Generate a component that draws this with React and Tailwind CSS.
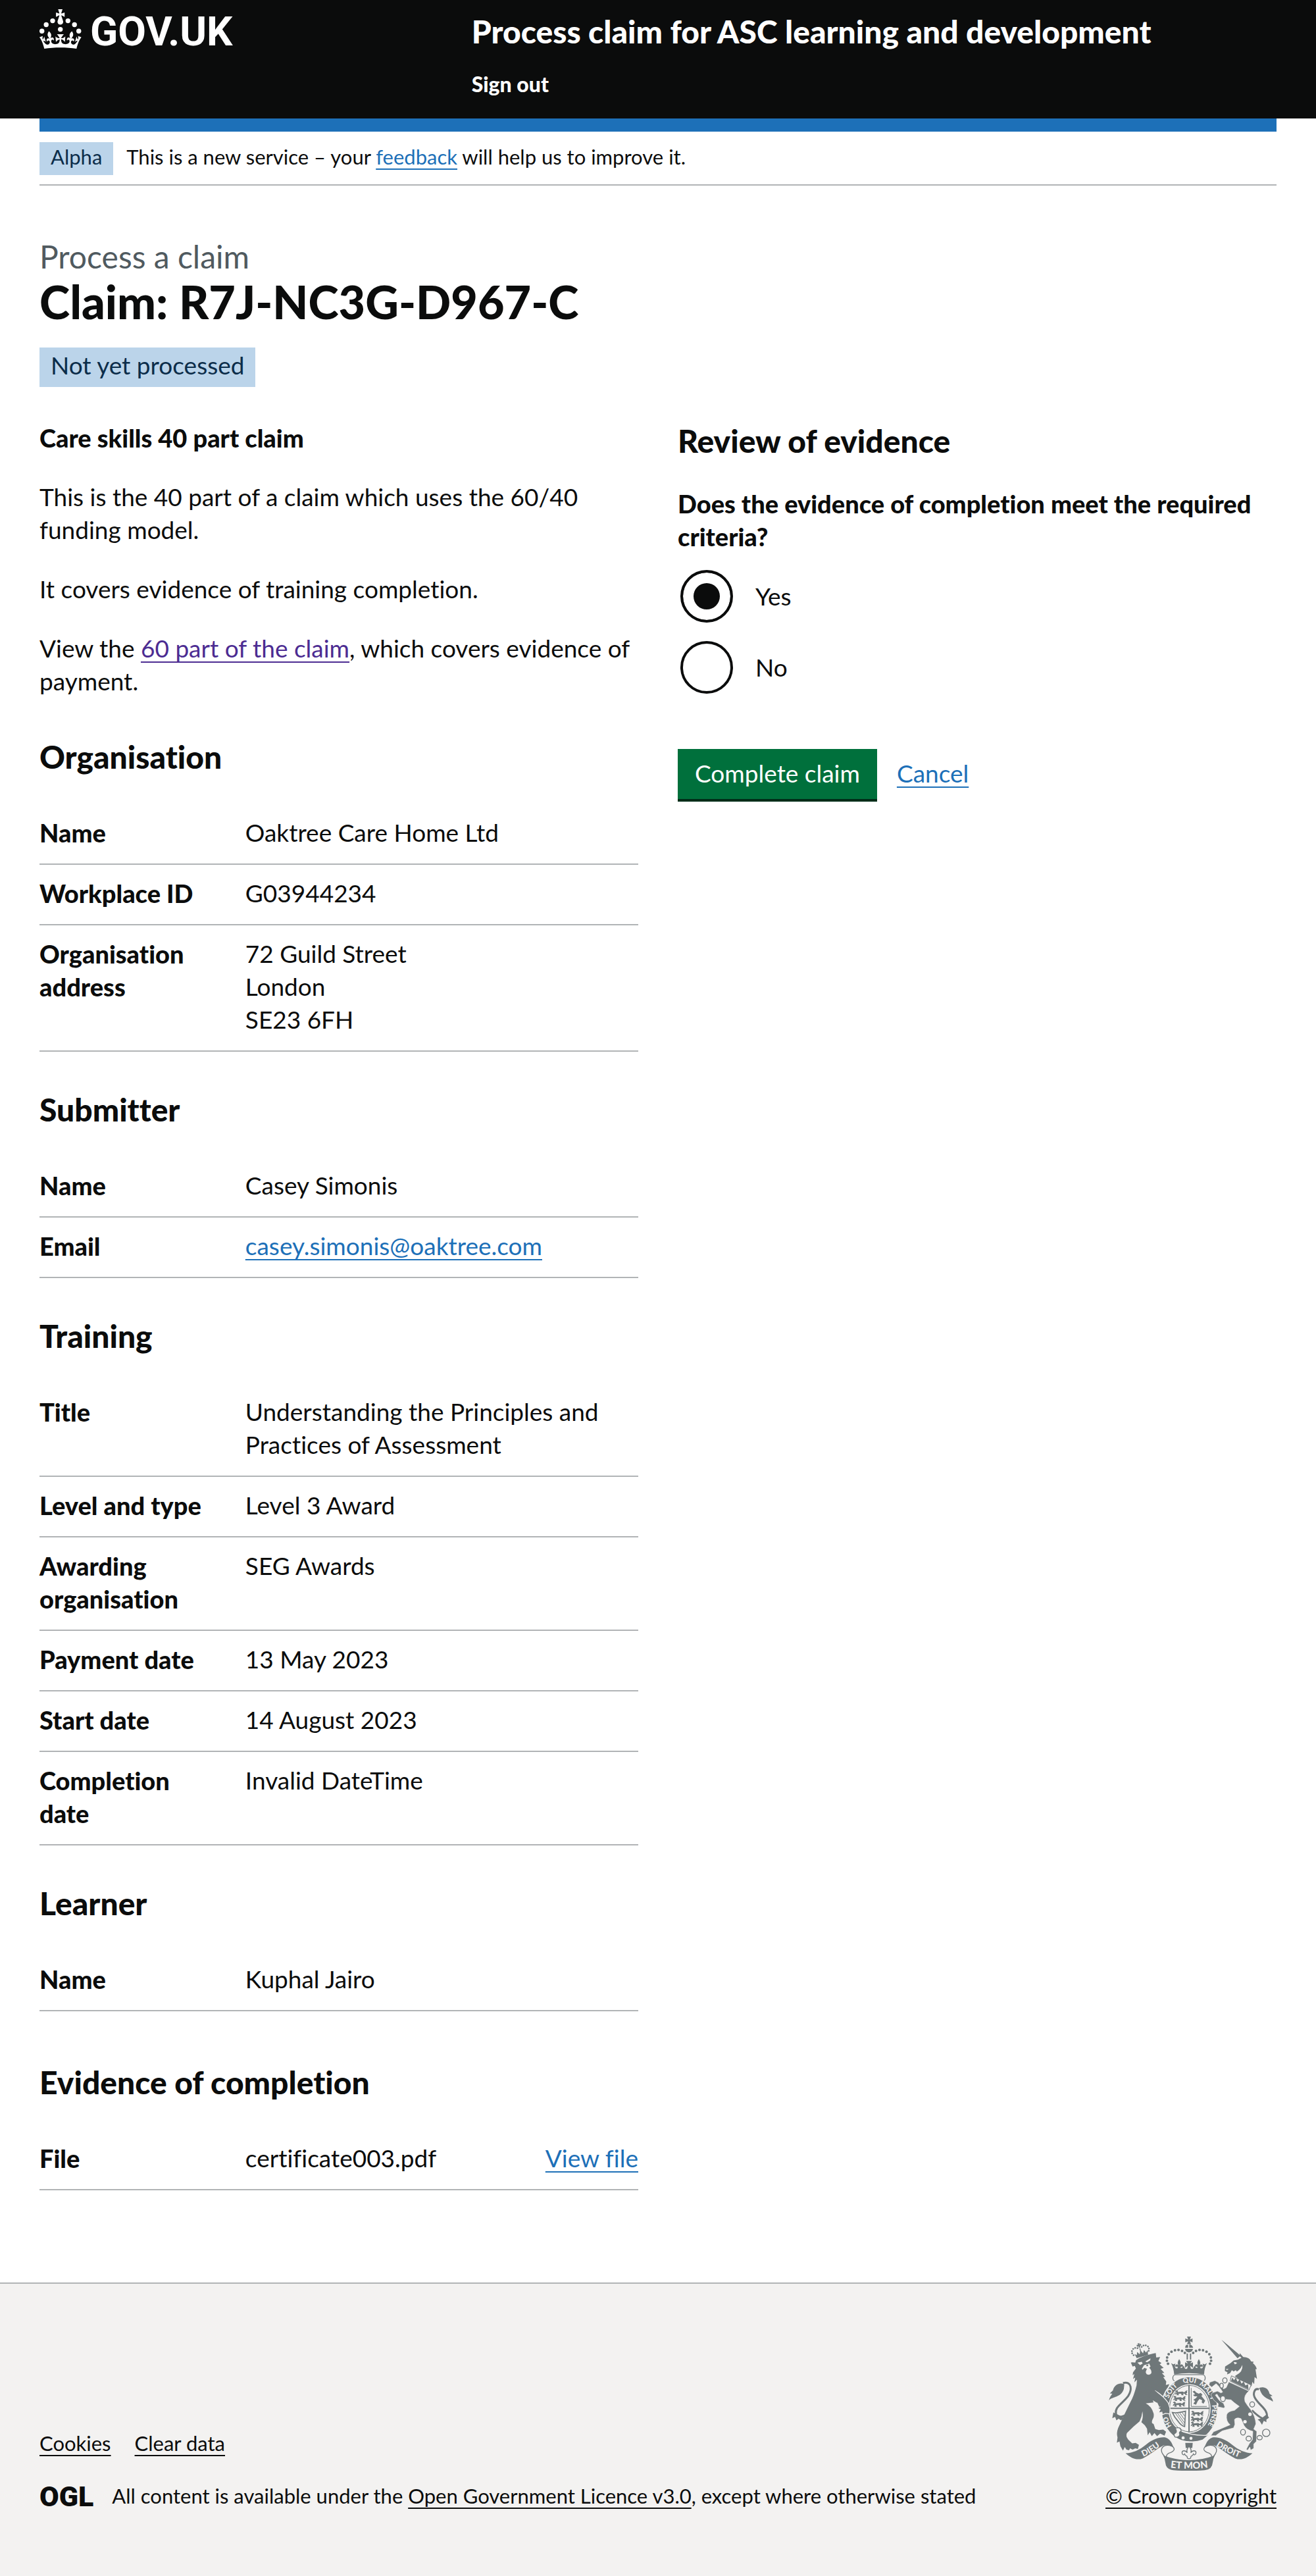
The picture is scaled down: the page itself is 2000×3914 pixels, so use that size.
const LINK = "underline decoration-2 underline-offset-[6px]";
const BLUE_LINK = "text-[#1d70b8] underline decoration-2 underline-offset-[6px]";

function Crown() {
  return (
    <svg className="h-[60px] w-[64px] shrink-0" viewBox="0 0 64 60" fill="currentColor" aria-hidden="true">
      <circle cx="20" cy="17.6" r="3.7" />
      <circle cx="10.2" cy="23.5" r="3.7" />
      <circle cx="3.7" cy="33.2" r="3.7" />
      <circle cx="31.7" cy="30.6" r="3.7" />
      <circle cx="43.3" cy="17.6" r="3.7" />
      <circle cx="53.2" cy="23.5" r="3.7" />
      <circle cx="59.7" cy="33.2" r="3.7" />
      <path d="M33.1,9.8c.2-.1.3-.3.5-.5l4.6,2.4v-6.8l-4.6,1.5c-.1-.2-.3-.3-.5-.5l1.9-5.9h-6.7l1.9,5.9c-.2.1-.3.3-.5.5l-4.6-1.5v6.8l4.6-2.4c.1.2.3.3.5.5l-2.6,8c-.9,2.8,1.2,5.7,4.1,5.7h0c3,0,5.1-2.9,4.1-5.7l-2.6-8ZM37,37.9s-3.4,3.8-4.1,6.1c2.2,0,4.2-.5,6.4-2.8l-.7,8.5c-2-2.8-4.4-4.1-5.7-3.8.1,3.1.5,6.7,5.8,7.2,3.7.3,6.7-1.5,7-3.8.4-2.6-2-4.3-3.7-1.6-1.4-4.5,2.4-6.1,4.9-3.2-1.9-4.5-1.8-7.7,2.4-10.9,3,4,2.6,7.3-1.2,11.1,2.4-1.3,6.2,0,4,4.6-1.2-2.8-3.7-2.2-4.2.2-.3,1.7.7,3.7,3,4.2,1.9.3,4.7-.9,7-5.9-1.3,0-2.4.7-3.9,1.7l2.4-8c.6,2.3,1.4,3.7,2.2,4.5.6-1.6.5-2.8,0-5.3l5,1.8c-2.6,3.6-5.2,8.7-7.3,17.5-7.4-1.1-15.7-1.7-24.5-1.7h0c-8.8,0-17.1.6-24.5,1.7-2.1-8.9-4.7-13.9-7.3-17.5l5-1.8c-.5,2.5-.6,3.7,0,5.3.8-.8,1.6-2.3,2.2-4.5l2.4,8c-1.5-1-2.6-1.7-3.9-1.7,2.3,5,5.2,6.2,7,5.9,2.3-.4,3.3-2.4,3-4.2-.5-2.4-3-3.1-4.2-.2-2.2-4.6,1.6-6,4-4.6-3.7-3.7-4.2-7.1-1.2-11.1,4.2,3.2,4.3,6.4,2.4,10.9,2.5-2.8,6.3-1.3,4.9,3.2-1.8-2.7-4.1-1-3.7,1.6.3,2.3,3.3,4.1,7,3.8,5.4-.5,5.7-4.2,5.8-7.2-1.3-.2-3.7,1-5.7,3.8l-.7-8.5c2.2,2.3,4.2,2.7,6.4,2.8-.7-2.3-4.1-6.1-4.1-6.1h10.6,0Z" />
    </svg>
  );
}

const INK = "#6f7779";
const PAPER = "#f3f2f1";
const PEARLS = [[312, 153], [307, 139], [308, 124], [315, 109], [328, 98], [344, 91], [360, 90], [376, 94], [389, 103]];
const RINGS = [[572, 229, 10, 12], [557, 253, 8, 11], [563, 313, 11, 13], [697, 339, 11, 12], [655, 466, 11, 13], [681, 495, 12, 11], [731, 491, 12, 10], [761, 469, 17, 17]];
const MOTTO = [["HO", "17%"], ["SOIT", "37%"], ["QUI", "50%"], ["MAL", "61%"], ["Y", "68%"], ["PENSE", "79%"]];

function Passant({ x, y }) {
  return (
    <path
      transform={`translate(${x} ${y})`}
      d="M0 4 L6 0 L14 3 L12 8 L34 6 L42 10 L50 2 L58 1 L54 6 L56 12 L50 16 L58 21 L48 22 L44 16 L36 16 L40 23 L30 23 L28 16 L16 16 L18 23 L6 23 L10 16 L0 20 L2 13 L8 10 Z"
    />
  );
}

function Lis({ x, y }) {
  return (
    <path
      transform={`translate(${x} ${y})`}
      d="M0 -19 C7 -8 9 0 3 9 C8 4 17 3 18 12 C17 18 11 18 10 13 C7 17 5 20 8 26 L-8 26 C-5 20 -7 17 -10 13 C-11 18 -17 18 -18 12 C-17 3 -8 4 -3 9 C-9 0 -7 -8 0 -19 Z"
    />
  );
}

function RoyalArms() {
  return (
    <svg className="h-[204px] w-[250px]" viewBox="42 28 750 614" fill={INK} aria-hidden="true">
      <defs>
        <path id="garter" d="M410 484 A104 123 0 0 1 410 238 A104 123 0 0 1 410 484" />
        <path id="scroll-left" d="M182 584 Q228 570 290 519" />
        <path id="scroll-right" d="M519 520 Q580 562 650 586" />
        <path id="scroll-mid" d="M318 627 Q408 640 500 627" />
      </defs>

      {/* lion's tail */}
      <path d="M106 241 C150 232 146 274 130 300 C106 334 66 350 74 382 C80 404 116 398 146 366" fill="none" stroke={INK} strokeWidth="9" />
      <path d="M112 246 C90 238 66 248 60 275 L46 288 L57 290 C50 300 44 308 42 320 C58 302 98 308 110 268 Z" />
      <path d="M62 376 L57 402 L70 396 L76 412 L86 404 L96 411 L112 404 L96 392 Z" />

      {/* lion */}
      <path d="M148 146 L142 148 L150 166 L160 163 L165 175 L152 192 L150 205 L158 200 L152 222 L162 216 L158 238 L170 226 L168 252 Q156 300 140 328 Q112 384 84 446 Q75 470 81 490 L78 514 L90 508 L94 530 L106 550 L114 534 L122 546 L134 549 L138 540 L150 546 L162 540 L174 543 L179 524 L164 515 L148 517 L130 500 Q117 484 124 470 Q152 440 182 416 Q192 396 195 370 Q200 398 190 420 L206 434 L216 450 L219 480 L228 466 L238 484 L250 470 L262 484 L276 472 L296 482 L303 464 L290 454 L270 456 L254 452 L246 428 Q234 426 240 410 Q250 394 246 380 Q236 346 210 334 L246 330 L242 320 L262 332 L266 318 L276 336 L288 334 L300 330 L312 330 Q308 314 298 302 Q304 274 318 246 L302 250 L304 234 L290 214 L299 212 L284 196 L295 194 L278 176 L292 172 L274 156 L282 150 L268 140 L276 122 L258 124 L256 104 L244 106 Q190 118 166 136 L162 148 Z" />
      <path d="M172 148 L192 144 L196 152 L184 159 Z M208 142 L232 128 L230 138 L216 146 Z M202 160 L226 152 L232 166 L226 172 Q238 182 236 196 Q228 208 214 200 Q206 190 216 176 L204 172 L196 180 L192 176 Z" fill={PAPER} />
      <path d="M212 158 L222 156 L220 164 L214 164 Z" />
      <path d="M162 130 Q190 108 226 102" fill="none" stroke={PAPER} strokeWidth="5" />
      <g transform="rotate(-16 188 100)">
        <path d="M158 100 L166 108 L172 94 L180 108 L188 90 L196 108 L204 94 L210 108 L220 100 L216 121 L162 121 Z" />
        {[[152, 104], [148, 94], [150, 84], [158, 76], [168, 74], [178, 78], [198, 78], [208, 74], [218, 76], [226, 84], [228, 94], [224, 104]].map(([x, y]) => (
          <circle key={`${x}-${y}`} cx={x} cy={y} r="4" />
        ))}
        <path d="M184 78 L192 78 L191 70 L198 72 L198 62 L191 65 L193 58 L183 58 L185 65 L178 62 L178 72 L185 70 Z M186 82 h4 v14 h-4 Z" />
      </g>

      {/* unicorn's tail */}
      <path d="M728 270 C708 262 700 288 708 306 C724 340 770 360 764 396 C758 416 730 400 696 366" fill="none" stroke={INK} strokeWidth="9" />
      <path d="M722 268 C744 252 772 262 776 290 L790 300 L780 302 C786 310 792 316 792 326 C772 310 742 312 730 264 Z" />
      <path d="M764 384 L774 400 L762 408 L762 420 L750 414 L742 432 L732 416 L722 408 L740 402 Z" />

      {/* royal crown */}
      {PEARLS.map(([x, y]) => (
        <g key={`${x}-${y}`}>
          <circle cx={x} cy={y} r="6" />
          <circle cx={816 - x} cy={y} r="6" />
        </g>
      ))}
      <path d="M399 29 H417 L412 42 L424 37 V55 L412 50 L417 63 H399 L404 50 L391 55 V37 L404 42 Z" />
      <path d="M396 66 H404 V80 H390 Q391 70 396 66 Z M409 65 H414 Q425 70 427 80 H409 Z M390 85 H426 Q424 99 408 101 Q392 99 390 85 Z" />
      <path d="M397 106 h6 v28 h-6 Z M412 106 h6 v28 h-6 Z" />
      <Lis x={363} y={151} />
      <Lis x={453} y={151} />
      <path d="M394 140 H422 L413 152 L426 146 V172 L413 162 L418 180 H398 L403 162 L390 172 V146 L403 152 Z" />
      <path d="M326 150 L336 156 L346 152 Q340 166 348 174 L376 172 L384 162 L390 176 L426 176 L432 162 L440 172 L468 174 Q476 166 470 152 L480 156 L490 150 Q478 172 477 202 Q408 190 340 202 Q338 172 326 150 Z" />

      {/* garter and shield */}
      <rect x="334" y="203" width="148" height="30" rx="14" fill={PAPER} stroke={INK} strokeWidth="4" />
      <ellipse cx="410" cy="361" rx="129" ry="149" stroke={PAPER} strokeWidth="5" />
      <ellipse cx="410" cy="358" rx="97" ry="112" fill={PAPER} />
      <ellipse cx="410" cy="358" rx="91" ry="106" fill="none" stroke={INK} strokeWidth="3" />
      <path d="M318 354 H502 V360 H318 Z M405 250 H411 V466 H405 Z" />
      <Passant x={344} y={274} />
      <Passant x={336} y={300} />
      <Passant x={334} y={326} />
      <Passant x={418} y={368} />
      <Passant x={416} y={394} />
      <Passant x={416} y={418} />
      <path d="M418 264 V348 H490" fill="none" stroke={INK} strokeWidth="3" />
      <path d="M424 280 L434 276 L440 284 L452 290 L462 286 L470 296 L464 300 L474 312 L482 322 L474 336 L466 330 L468 320 L456 314 L448 324 L440 340 L428 336 L436 324 L428 318 L440 310 L446 302 L434 302 L426 296 L436 292 Z" />
      <path d="M332 376 Q352 380 392 370 L388 440 Q372 436 358 416 Q340 396 332 376 Z" fill="none" stroke={INK} strokeWidth="5" />
      <path d="M346 380 L384 432 M356 380 L386 422 M366 378 L387 408 M377 376 L388 392" fill="none" stroke={INK} strokeWidth="3" />
      <g fill={PAPER} className="font-['Lato'] text-[31px] font-black" textAnchor="middle">
        {MOTTO.map(([word, at]) => (
          <text key={word}>
            <textPath href="#garter" startOffset={at}>{word}</textPath>
          </text>
        ))}
      </g>
      <path d="M334 456 Q400 486 496 478 L470 500 Q410 520 350 488 Z" />
      <path d="M360 456 Q420 484 494 480" fill="none" stroke={PAPER} strokeWidth="4" />
      <path d="M344 448 Q372 438 372 462 Q360 464 366 476 Q362 492 344 488 Q334 474 346 470 Q356 462 344 448 Z" fill={PAPER} stroke={INK} strokeWidth="4" />
      <circle cx="381" cy="492" r="7" fill={PAPER} />
      <circle cx="417" cy="494" r="7" fill={PAPER} />

      {/* lion's foreleg */}
      <path d="M252 276 Q292 300 313 332 L321 356 L320 382 L300 380 L286 386 L284 374 L268 378 L276 362 L264 356 L274 350 L288 334 Z" stroke={PAPER} strokeWidth="4" />
      <path d="M236 262 L262 284 L296 334 L288 346 L272 350 L262 328 L230 310 Z" />

      {/* unicorn */}
      <path d="M557 44 L563 48 L644 116 L630 128 Z" />
      <path d="M648 126 L640 118 L640 104 L656 122 Q684 122 692 142 L704 144 L700 150 Q716 164 718 178 L712 178 L719 222 L708 214 L706 246 L698 236 L694 256 Q650 236 618 210 L632 196 L622 182 L612 188 L604 182 L596 196 L582 202 L584 192 L572 186 L573 166 L598 150 L612 138 L632 134 Z" />
      <path d="M612 146 Q622 144 628 150 L618 156 Z M652 158 Q656 190 622 206 L606 200 Q642 186 652 158 Z M578 176 L590 178 L580 182 Z" fill={PAPER} />
      <path d="M602 208 L692 250 L682 274 L596 232 Z" fill={PAPER} stroke={INK} strokeWidth="3" />
      <path d="M600 232 L606 216 L614 228 L622 216 L630 236 L640 224 L648 244 L658 234 L666 252 L678 246 L680 270 Z" />
      <path stroke={PAPER} strokeWidth="2" d="M590 236 L682 278 Q656 298 664 326 Q676 346 690 362 Q712 394 714 428 L704 452 L718 462 L716 508 L704 520 L704 540 L690 548 L686 534 L676 549 L670 544 L684 518 L698 500 L700 462 Q672 456 660 436 L646 404 Q626 396 616 408 L618 430 L612 446 L560 460 L548 468 L530 482 L508 482 L520 464 L540 456 L596 432 Q576 416 580 386 Q586 370 616 366 L638 348 Q612 330 600 318 Q568 318 546 308 L536 292 L528 296 L548 322 L566 334 L572 350 L568 356 L552 352 L540 350 L542 336 L522 320 L508 296 L514 286 L538 278 L554 286 L562 282 L546 258 L532 244 L512 260 L500 250 L502 238 L526 230 L542 238 L566 268 L578 262 Z" />
      {RINGS.map(([x, y, rx, ry]) => (
        <ellipse key={`${x}-${y}`} cx={x} cy={y} rx={rx} ry={ry} fill={PAPER} stroke={INK} strokeWidth="4" />
      ))}
      <circle cx="687" cy="384" r="8" fill={PAPER} />
      <circle cx="664" cy="418" r="8" fill={PAPER} />

      {/* pendant */}
      <path d="M391 515 H425 L423 538 H393 Z" />
      <path d="M408 530 C418 542 420 552 416 560 C424 548 440 548 440 560 C440 570 430 572 428 566 C424 576 416 574 416 580 C418 590 398 590 400 580 C400 574 392 576 388 566 C386 572 376 570 376 560 C376 548 392 548 400 560 C396 552 398 542 408 530 Z" fill={PAPER} stroke={INK} strokeWidth="4" />

      {/* scroll */}
      <path d="M118 562 C152 560 180 548 212 522 C244 498 272 487 300 490 C326 498 332 524 341 545 L320 552 C308 548 314 524 292 526 C262 540 232 568 196 586 C168 596 142 584 118 562 Z" />
      <path d="M698 562 C664 560 636 548 604 522 C572 498 544 487 516 490 C490 498 484 524 475 545 L496 552 C508 548 502 524 524 526 C554 540 584 568 620 586 C648 596 674 584 698 562 Z" />
      <path d="M296 528 C280 536 278 552 288 566 L306 590 C300 570 310 562 326 558 C340 552 344 544 336 534 C324 526 310 524 296 528 Z" fill={PAPER} stroke={INK} strokeWidth="4" />
      <path d="M520 528 C536 536 538 552 528 566 L510 590 C516 570 506 562 490 558 C476 552 472 544 480 534 C492 526 506 524 520 528 Z" fill={PAPER} stroke={INK} strokeWidth="4" />
      <path d="M290 572 Q408 616 526 572 Q518 588 516 606 Q514 636 480 640 Q408 645 336 640 Q302 636 300 606 Q298 588 290 572 Z" />
      <g fill={PAPER} className="font-['Lato'] font-black" textAnchor="middle">
        <text className="text-[38px]"><textPath href="#scroll-left" startOffset="50%">DIEU</textPath></text>
        <text className="text-[38px]"><textPath href="#scroll-right" startOffset="50%">DROIT</textPath></text>
        <text className="text-[44px]"><textPath href="#scroll-mid" startOffset="50%">ET MON</textPath></text>
      </g>
    </svg>
  );
}

function Row({ label, children, action }) {
  return (
    <div className="grid grid-cols-[11fr_21fr] border-b-2 border-[#b1b4b6] pt-[18px] pb-[22px]">
      <dt className="pr-10 text-[38px] font-black">{label}</dt>
      <dd className="flex justify-between gap-4">
        <div>{children}</div>
        {action}
      </dd>
    </div>
  );
}

function Section({ title, className = "mt-[58px]", children }) {
  return (
    <section className={className}>
      <h2 className="mb-[42px] text-[48px] leading-[60px] font-black">{title}</h2>
      <dl>{children}</dl>
    </section>
  );
}

function Radio({ id, label, ...props }) {
  return (
    <div className="flex items-center">
      <input
        type="radio"
        id={id}
        name="criteria"
        className="m-1 size-20 shrink-0 appearance-none rounded-full border-4 border-[#0b0c0c] bg-white checked:bg-[#0b0c0c] checked:shadow-[inset_0_0_0_16px_white]"
        {...props}
      />
      <label htmlFor={id} className="pl-[30px]">{label}</label>
    </div>
  );
}

export default function App() {
  return (
    <div className="bg-white font-['Lato',sans-serif] text-[37px] leading-[50px] text-[#0b0c0c] [font-variant-ligatures:none]">
      <header className="bg-[#0b0c0c] px-[60px] text-white">
        <div className="grid grid-cols-[1fr_2fr] pb-8">
          <a href="#home" className="flex items-end gap-[13px] self-start pt-[14px]" aria-label="GOV.UK">
            <Crown />
            <span className="font-['Roboto'] text-[62px] leading-[52px] font-bold">GOV.UK</span>
          </a>
          <div className="pt-[18px] pl-[30px] font-black">
            <a href="#service" className="block text-[48px] leading-[60px]">Process claim for ASC learning and development</a>
            <nav className="mt-[30px] text-[32px] leading-[40px]">
              <a href="#sign-out">Sign out</a>
            </nav>
          </div>
        </div>
      </header>

      <div className="px-[60px]">
        <div className="h-5 bg-[#1d70b8]" />
        <div className="flex items-baseline gap-5 border-b-2 border-[#b1b4b6] pt-4 pb-[14px] text-[31px] leading-[40px]">
          <strong className="bg-[#bbd4ea] px-[17px] pt-[2px] pb-2 font-normal text-[#0c2d4a]">Alpha</strong>
          <span>
            This is a new service – your <a href="#feedback" className={BLUE_LINK}>feedback</a> will help us to improve it.
          </span>
        </div>

        <main className="pt-[78px] pb-[140px]">
          <h1>
            <span className="block text-[48px] leading-[60px] text-[#505a5f]">Process a claim</span>
            <span className="block text-[70px] leading-[76px] font-black">Claim: R7J-NC3G-D967-C</span>
          </h1>
          <strong className="mt-8 block w-fit bg-[#bbd4ea] px-[17px] pt-[2px] pb-2 font-normal text-[#0c2d4a]">Not yet processed</strong>

          <div className="mt-[52px] grid grid-cols-2 gap-[60px]">
            <div>
              <div className="flex flex-col gap-10">
                <p className="text-[38px] font-black">Care skills 40 part claim</p>
                <p>This is the 40 part of a claim which uses the 60/40 funding model.</p>
                <p>It covers evidence of training completion.</p>
                <p>
                  View the <a href="#sixty" className={`text-[#4c2c92] ${LINK}`}>60 part of the claim</a>, which covers evidence of payment.
                </p>
              </div>

              <Section title="Organisation" className="mt-[60px]">
                <Row label="Name">Oaktree Care Home Ltd</Row>
                <Row label="Workplace ID">G03944234</Row>
                <Row label="Organisation address">72 Guild Street<br />London<br />SE23 6FH</Row>
              </Section>
              <Section title="Submitter">
                <Row label="Name">Casey Simonis</Row>
                <Row label="Email">
                  <a href="mailto:casey.simonis@oaktree.com" className={BLUE_LINK}>casey.simonis@oaktree.com</a>
                </Row>
              </Section>
              <Section title="Training">
                <Row label="Title">Understanding the Principles and Practices of Assessment</Row>
                <Row label="Level and type">Level 3 Award</Row>
                <Row label="Awarding organisation">SEG Awards</Row>
                <Row label="Payment date">13 May 2023</Row>
                <Row label="Start date">14 August 2023</Row>
                <Row label="Completion date">Invalid DateTime</Row>
              </Section>
              <Section title="Learner">
                <Row label="Name">Kuphal Jairo</Row>
              </Section>
              <Section title="Evidence of completion" className="mt-[78px]">
                <Row label="File" action={<a href="#file" className={`shrink-0 ${BLUE_LINK}`}>View file</a>}>certificate003.pdf</Row>
              </Section>
            </div>

            <form onSubmit={(e) => e.preventDefault()}>
              <h2 className="text-[48px] leading-[60px] font-black">Review of evidence</h2>
              <fieldset className="mt-10">
                <legend className="text-[38px] font-black">Does the evidence of completion meet the required criteria?</legend>
                <div className="mt-[22px] flex flex-col gap-5">
                  <Radio id="criteria-yes" label="Yes" value="yes" defaultChecked />
                  <Radio id="criteria-no" label="No" value="no" />
                </div>
              </fieldset>
              <div className="mt-20 flex items-baseline gap-[30px]">
                <button type="submit" className="bg-[#00703c] px-[26px] pt-3 pb-[14px] text-white shadow-[0_4px_0_#002d18]">Complete claim</button>
                <a href="#cancel" className={BLUE_LINK}>Cancel</a>
              </div>
            </form>
          </div>
        </main>
      </div>

      <footer className="flex items-end justify-between border-t-2 border-[#b1b4b6] bg-[#f3f2f1] px-[60px] pt-20 pb-[102px] text-[31px] leading-[40px]">
        <div className="flex flex-col gap-10">
          <ul className="flex gap-9">
            <li><a href="#cookies" className={LINK}>Cookies</a></li>
            <li><a href="#clear" className={LINK}>Clear data</a></li>
          </ul>
          <div className="flex items-end gap-7">
            <span className="font-['Roboto'] text-[43px] leading-[38px] font-black">OGL</span>
            <span>
              All content is available under the <a href="#ogl" className={LINK}>Open Government Licence v3.0</a>, except where otherwise stated
            </span>
          </div>
        </div>
        <a href="#copyright" className={`flex flex-col items-center gap-[18px] ${LINK}`}>
          <RoyalArms />
          <span>© Crown copyright</span>
        </a>
      </footer>
    </div>
  );
}
